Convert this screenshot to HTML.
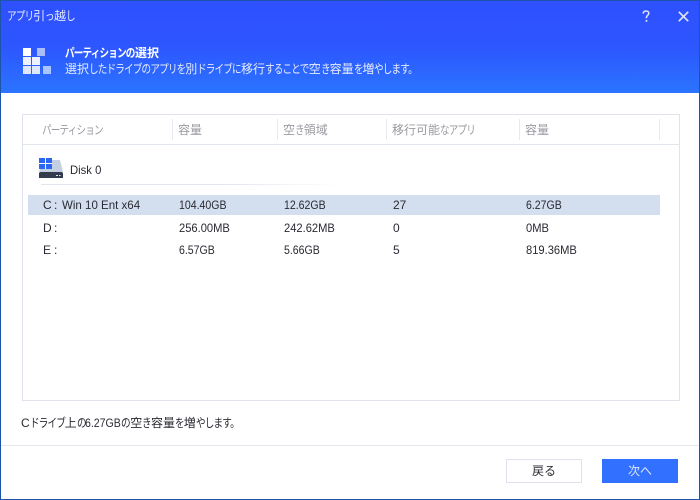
<!DOCTYPE html>
<html lang="ja"><head><meta charset="utf-8"><style>
html,body{margin:0;padding:0;width:700px;height:500px;overflow:hidden;background:#fff}
body{font-family:"Liberation Sans","Noto Sans CJK JP",sans-serif;font-size:12px;color:#2a2a33;position:relative}
.a{position:absolute;white-space:nowrap}
.hdr{left:0;top:0;width:700px;height:93px;background:linear-gradient(180deg,#2e50ff 0%,#2d56ff 50%,#2b74ff 100%)}
.b{background:#1c55a8;position:absolute}
.th{color:#9a9aa2;top:122px;line-height:16px}
.sep{background:#e6e9f0;width:1px;top:119px;height:21px;position:absolute}
.r{line-height:16px;transform-origin:0 50%}
.g{transform:scaleX(.88)}
.m{transform:scaleX(.93)}
.s{position:absolute;width:8px;height:8px}
.k{display:inline-block;width:calc(var(--n)*8.75px)}
.k>i{font-style:normal;display:inline-block;letter-spacing:-1.05px;transform:scaleX(.8);transform-origin:0 50%}
.l{display:inline-block;width:36px}
.l>i{font-style:normal;display:inline-block;transform:scaleX(.88);transform-origin:0 50%}
</style></head><body>
<div class="a hdr"></div>
<div class="a" style="left:7px;top:8px;line-height:16px;color:#e4e9ff"><span class="k" style="--n:3"><i>アプリ</i></span>引<span class="k" style="--n:1"><i>っ</i></span>越<span class="k" style="--n:1"><i>し</i></span></div>
<svg class="a" style="left:640px;top:9px" width="16" height="16" viewBox="0 0 16 16"><path d="M2.8 4.6C2.9 2.9 4 2 5.6 2 7.2 2 8.4 2.9 8.4 4.4 8.4 6.3 6 6.4 6 8.6V9.3" transform="translate(0.4 0)" fill="none" stroke="#dfe5ff" stroke-width="1.6"/><rect x="5.6" y="11" width="1.7" height="1.8" fill="#dfe5ff"/></svg>
<svg class="a" style="left:678px;top:11px" width="11" height="11" viewBox="0 0 11 11"><path d="M.8 .8L10.2 10.2M10.2 .8L.8 10.2" stroke="#dfe5ff" stroke-width="1.7" fill="none"/></svg>
<div class="s" style="left:23px;top:48px;background:#fff"></div>
<div class="s" style="left:37px;top:48px;background:#a9bdfb"></div>
<div class="s" style="left:23px;top:57px;background:#eef2fe"></div>
<div class="s" style="left:32px;top:57px;background:#eef2fe"></div>
<div class="s" style="left:23px;top:66px;background:#dfe7fd"></div>
<div class="s" style="left:32px;top:66px;background:#dfe7fd"></div>
<div class="s" style="left:43px;top:66px;background:#a9c3fc"></div>
<div class="a" style="left:65px;top:45px;line-height:16px;color:#fff;font-weight:bold"><span class="k" style="--n:8"><i>パーティションの</i></span>選択</div>
<div class="a" style="left:65px;top:61px;line-height:16px;color:#e6ecff">選択<span class="k" style="--n:11"><i>したドライブのアプリを</i></span>別<span class="k" style="--n:5"><i>ドライブに</i></span>移行<span class="k" style="--n:5"><i>することで</i></span>空<span class="k" style="--n:1"><i>き</i></span>容量<span class="k" style="--n:1"><i>を</i></span>増<span class="k" style="--n:5"><i>やします。</i></span></div>

<div class="a" style="left:22px;top:114px;width:656px;height:285px;border:1px solid #e0e3ee"></div>
<div class="a" style="left:23px;top:144px;width:656px;height:1px;background:#e0e5ee"></div>
<div class="a th" style="left:42px"><span class="k" style="--n:7"><i>パーティション</i></span></div>
<div class="a th" style="left:178px">容量</div>
<div class="a th" style="left:283px">空<span class="k" style="--n:1"><i>き</i></span>領域</div>
<div class="a th" style="left:392px">移行可能<span class="k" style="--n:4"><i>なアプリ</i></span></div>
<div class="a th" style="left:525px">容量</div>
<div class="sep" style="left:172px"></div>
<div class="sep" style="left:277px"></div>
<div class="sep" style="left:386px"></div>
<div class="sep" style="left:519px"></div>
<div class="sep" style="left:659px"></div>

<svg class="a" style="left:39px;top:157px" width="25" height="22" viewBox="0 0 25 22">
<path d="M13 3H21L24 15H0L1 12H13Z" fill="#c4cfe2"/>
<path d="M0 16.5Q0 15 2 15H22Q24 15 24 16.5V21H0Z" fill="#333c4e"/>
<rect x="17" y="18" width="2" height="1" fill="#dfe6f2"/><rect x="20" y="18" width="1.5" height="1" fill="#dfe6f2"/>
<rect x="0" y="1" width="6" height="5" fill="#2b66f5"/><rect x="7" y="1" width="6" height="5" fill="#2b66f5"/>
<rect x="0" y="7" width="6" height="5" fill="#2b66f5"/><rect x="7" y="7" width="6" height="5" fill="#2b66f5"/>
</svg>
<div class="a r" style="left:70px;top:162px;transform:scaleX(.94)">Disk 0</div>
<div class="a" style="left:41px;top:184px;width:300px;height:1px;background:linear-gradient(90deg,#e0e5ee 0%,#e0e5ee 60%,#fff 100%)"></div>

<div class="a" style="left:28px;top:195px;width:632px;height:20px;background:#d3dfef"></div>
<div class="a r" style="left:43px;top:197px">C</div>
<div class="a r" style="left:54px;top:197px">:</div>
<div class="a r" style="left:62px;top:197px;transform:scaleX(.96)">Win 10 Ent x64</div>
<div class="a r g" style="left:179px;top:197px">104.40GB</div>
<div class="a r g" style="left:284px;top:197px">12.62GB</div>
<div class="a r" style="left:393px;top:197px">27</div>
<div class="a r g" style="left:526px;top:197px">6.27GB</div>

<div class="a r" style="left:43px;top:220px">D</div>
<div class="a r" style="left:54px;top:220px">:</div>
<div class="a r m" style="left:179px;top:220px">256.00MB</div>
<div class="a r m" style="left:284px;top:220px">242.62MB</div>
<div class="a r" style="left:393px;top:220px">0</div>
<div class="a r m" style="left:526px;top:220px">0MB</div>

<div class="a r" style="left:43px;top:242px">E</div>
<div class="a r" style="left:54px;top:242px">:</div>
<div class="a r g" style="left:179px;top:242px">6.57GB</div>
<div class="a r g" style="left:284px;top:242px">5.66GB</div>
<div class="a r" style="left:393px;top:242px">5</div>
<div class="a r m" style="left:526px;top:242px">819.36MB</div>

<div class="a" style="left:21px;top:415px;line-height:16px">C<span class="k" style="--n:4"><i>ドライブ</i></span>上<span class="k" style="--n:1"><i>の</i></span><span class="l"><i>6.27GB</i></span><span class="k" style="--n:1"><i>の</i></span>空<span class="k" style="--n:1"><i>き</i></span>容量<span class="k" style="--n:1"><i>を</i></span>増<span class="k" style="--n:5"><i>やします。</i></span></div>
<div class="a" style="left:1px;top:445px;width:698px;height:1px;background:#e6e7ee"></div>
<div class="a" style="left:506px;top:459px;width:74px;height:22px;border:1px solid #dde2ee;text-align:center;line-height:22px;color:#2a2a33;background:#fff">戻る</div>
<div class="a" style="left:602px;top:459px;width:76px;height:24px;background:#3271ff;text-align:center;line-height:24px;color:#dfe6ff">次へ</div>

<div class="b" style="left:0;top:0;width:700px;height:1px"></div>
<div class="b" style="left:0;top:0;width:1px;height:500px"></div>
<div class="b" style="left:699px;top:0;width:1px;height:500px"></div>
<div class="b" style="left:0;top:499px;width:700px;height:1px"></div>
</body></html>
